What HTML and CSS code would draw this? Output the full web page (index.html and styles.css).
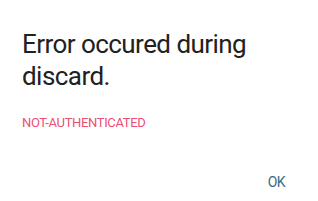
FILE: index.html
```html
<!DOCTYPE html>
<html lang="en">
<head>
    <meta charset="UTF-8">
    <meta name="viewport" content="width=device-width, initial-scale=1.0">
    <title>Error</title>
    <link rel="stylesheet" href="styles.css">
</head>
<body>
    <div class="dialog">
        <h2 class="dialog-title">Error occured during discard.</h2>
        <p class="dialog-message">NOT-AUTHENTICATED</p>
        <div class="dialog-actions">
            <button class="dialog-button">OK</button>
        </div>
    </div>
</body>
</html>
```

FILE: styles.css
```css
body {
    font-family: 'Roboto', 'Liberation Sans', sans-serif;
    background-color: #fff;
    margin: 0;
    padding: 0;
}
.dialog {
    padding: 28px 33px 0 22px;
}
.dialog-title {
    margin: 0;
    font-size: 26px;
    font-weight: normal;
    line-height: 32px;
    letter-spacing: -0.55px;
    color: #212121;
    max-width: 250px;
}
.dialog-message {
    margin: 21px 0 0;
    font-size: 13px;
    line-height: 20px;
    letter-spacing: -0.35px;
    color: #ec4f73;
}
.dialog-actions {
    display: flex;
    justify-content: flex-end;
    margin-top: 39px;
}
.dialog-button {
    background: none;
    border: none;
    padding: 0;
    font-family: inherit;
    font-size: 14px;
    line-height: 20px;
    letter-spacing: -0.6px;
    color: #3b6a82;
    cursor: pointer;
}
```
